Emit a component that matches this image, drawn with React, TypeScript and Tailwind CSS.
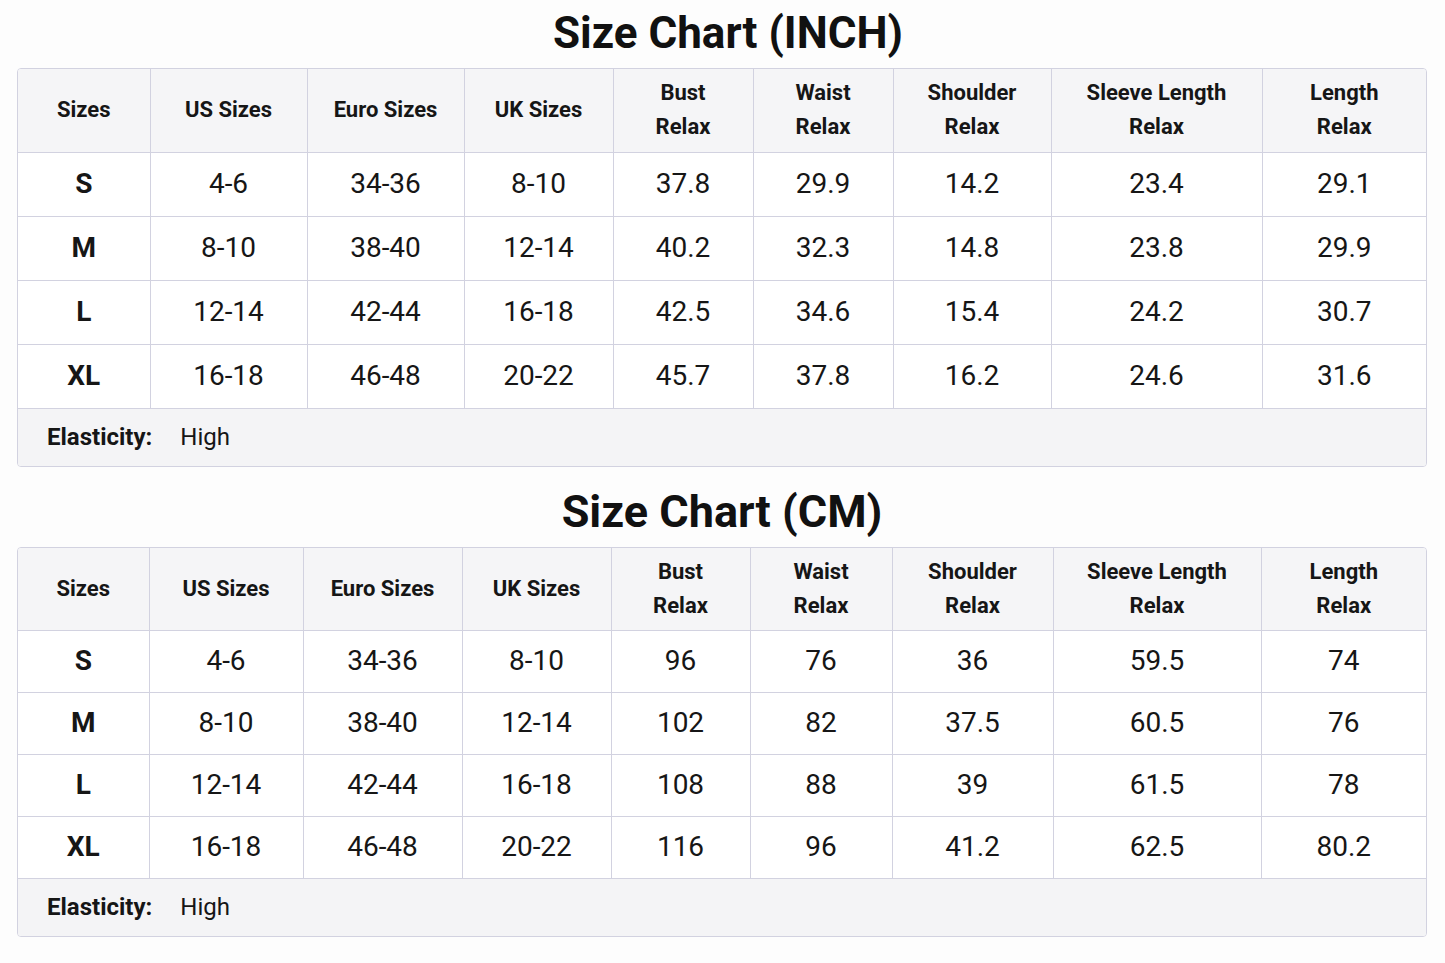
import React from "react";

const headers = [
  ["Sizes"],
  ["US Sizes"],
  ["Euro Sizes"],
  ["UK Sizes"],
  ["Bust", "Relax"],
  ["Waist", "Relax"],
  ["Shoulder", "Relax"],
  ["Sleeve Length", "Relax"],
  ["Length", "Relax"],
];

const inchRows = [
  ["S", "4-6", "34-36", "8-10", "37.8", "29.9", "14.2", "23.4", "29.1"],
  ["M", "8-10", "38-40", "12-14", "40.2", "32.3", "14.8", "23.8", "29.9"],
  ["L", "12-14", "42-44", "16-18", "42.5", "34.6", "15.4", "24.2", "30.7"],
  ["XL", "16-18", "46-48", "20-22", "45.7", "37.8", "16.2", "24.6", "31.6"],
];

const cmRows = [
  ["S", "4-6", "34-36", "8-10", "96", "76", "36", "59.5", "74"],
  ["M", "8-10", "38-40", "12-14", "102", "82", "37.5", "60.5", "76"],
  ["L", "12-14", "42-44", "16-18", "108", "88", "39", "61.5", "78"],
  ["XL", "16-18", "46-48", "20-22", "116", "96", "41.2", "62.5", "80.2"],
];

type ChartProps = {
  rows: string[][];
  cols: number[];
  headH: string;
  rowH: string;
};

const Chart = ({ rows, cols, headH, rowH }: ChartProps) => {
  return (
    <div className="overflow-hidden rounded-[4px] border border-[#d2d2e0] bg-white">
      <table className="w-full table-fixed border-collapse">
        <colgroup>
          {cols.map((w, i) => (
            <col key={i} style={{ width: w }} />
          ))}
          <col />
        </colgroup>
        <thead>
          <tr className={`${headH} bg-[#f5f5f7]`}>
            {headers.map((h, i) => (
              <th
                key={i}
                className="border-b border-l border-[#d2d2e0] first:border-l-0 px-1 text-center text-[22px] font-bold leading-[34px] text-[#161616]"
              >
                {h.map((line) => (
                  <div key={line}>{line}</div>
                ))}
              </th>
            ))}
          </tr>
        </thead>
        <tbody>
          {rows.map((r) => (
            <tr key={r[0]} className={rowH}>
              {r.map((v, i) => (
                <td
                  key={i}
                  className={`border-b border-l border-[#d2d2e0] first:border-l-0 text-center text-[28px] text-[#161616] ${
                    i === 0 ? "font-bold" : "font-normal"
                  }`}
                >
                  {v}
                </td>
              ))}
            </tr>
          ))}
          <tr className="h-[58px] bg-[#f4f4f6]">
            <td colSpan={9} className="pl-[29px] text-[24px] text-[#161616]">
              <span className="font-bold">Elasticity:</span>
              <span className="ml-[28px]">High</span>
            </td>
          </tr>
        </tbody>
      </table>
    </div>
  );
};

export default function App() {
  return (
    <div
      className="min-h-screen bg-[#fdfdfd] px-[17px] pr-[18px]"
      style={{ fontFamily: "Roboto, 'Noto Sans', sans-serif" }}
    >
      <div className="flex h-[68px] items-center justify-center pb-[2px] pl-[12px] text-[44px] font-bold text-[#111]">
        Size Chart (INCH)
      </div>
      <Chart
        rows={inchRows}
        cols={[132, 157, 157, 149, 140, 140, 158, 211]}
        headH="h-[83px]"
        rowH="h-[64px]"
      />
      <div className="flex h-[80px] items-center justify-center pt-[10px] text-[45px] font-bold text-[#111]">
        Size Chart (CM)
      </div>
      <Chart
        rows={cmRows}
        cols={[131, 154, 159, 149, 139, 142, 161, 208]}
        headH="h-[82px]"
        rowH="h-[62px]"
      />
    </div>
  );
}
